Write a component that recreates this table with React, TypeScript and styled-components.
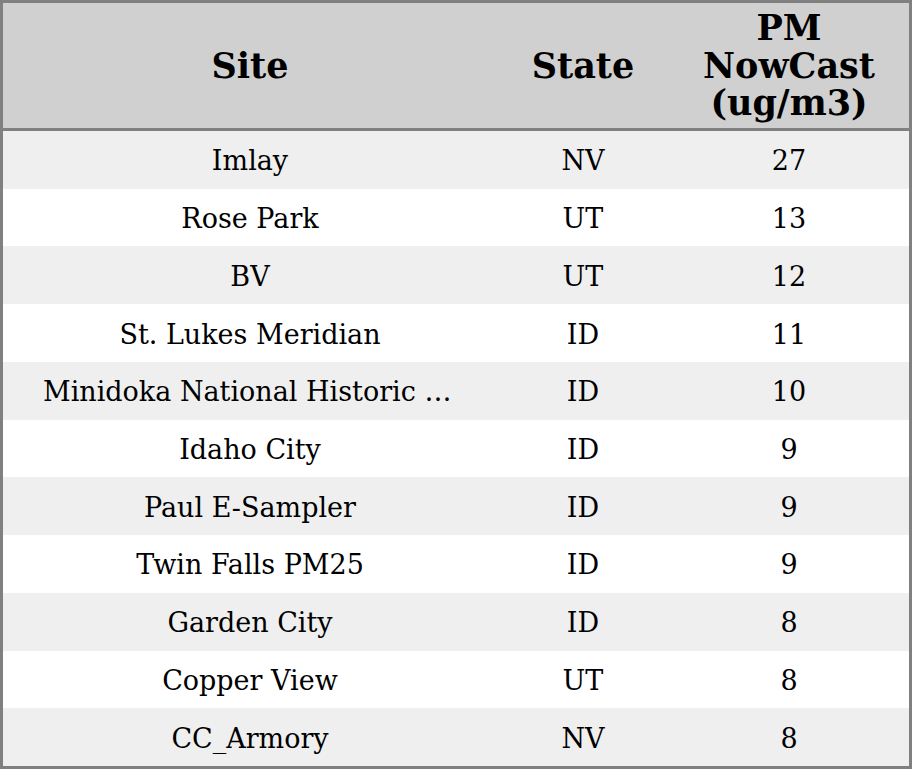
import styled, { createGlobalStyle } from 'styled-components';

const GlobalStyle = createGlobalStyle`
  html, body {
    margin: 0;
    padding: 0;
    background: #ffffff;
  }
`;

type Reading = {
  site: string;
  state: string;
  pm: number;
};

const readings: Reading[] = [
  { site: 'Imlay', state: 'NV', pm: 27 },
  { site: 'Rose Park', state: 'UT', pm: 13 },
  { site: 'BV', state: 'UT', pm: 12 },
  { site: 'St. Lukes Meridian', state: 'ID', pm: 11 },
  { site: 'Minidoka National Historic Site', state: 'ID', pm: 10 },
  { site: 'Idaho City', state: 'ID', pm: 9 },
  { site: 'Paul E-Sampler', state: 'ID', pm: 9 },
  { site: 'Twin Falls PM25', state: 'ID', pm: 9 },
  { site: 'Garden City', state: 'ID', pm: 8 },
  { site: 'Copper View', state: 'UT', pm: 8 },
  { site: 'CC_Armory', state: 'NV', pm: 8 },
];

function App() {
  return (
    <>
      <GlobalStyle />
      <TableWrapper>
        <HeaderRow>
          <HeaderCell>Site</HeaderCell>
          <HeaderCell>State</HeaderCell>
          <HeaderCell>
            PM
            <br />
            NowCast
            <br />
            (ug/m3)
          </HeaderCell>
        </HeaderRow>
        {readings.map((r, i) => (
          <BodyRow key={r.site} $striped={i % 2 === 0}>
            <BodyCell>{r.site}</BodyCell>
            <BodyCell>{r.state}</BodyCell>
            <BodyCell>{r.pm}</BodyCell>
          </BodyRow>
        ))}
      </TableWrapper>
    </>
  );
}

const TableWrapper = styled.div`
  box-sizing: border-box;
  width: 912px;
  height: 769px;
  display: grid;
  grid-template-rows: 128px repeat(11, 1fr);

  border: 3px solid #808080;
  background: #ffffff;

  font-family: 'DejaVu Serif', serif;
  color: #000000;
`;

const HeaderRow = styled.div`
  display: grid;
  grid-template-columns: 494px 172px 1fr;

  background: #d0d0d0;
  border-bottom: 3px solid #808080;
`;

const HeaderCell = styled.div`
  display: flex;
  align-items: center;
  justify-content: center;

  text-align: center;
  font-size: 35px;
  font-weight: 700;
  line-height: 37.5px;
`;

const BodyRow = styled.div<{ $striped: boolean }>`
  display: grid;
  grid-template-columns: 494px 172px 1fr;
  align-items: center;

  background: ${(p) => (p.$striped ? '#efefef' : '#ffffff')};
`;

const BodyCell = styled.div`
  padding: 3px 40px 0;
  overflow: hidden;
  white-space: nowrap;
  text-overflow: ellipsis;

  text-align: center;
  font-size: 27px;
  line-height: 30px;
`;

export default App;
